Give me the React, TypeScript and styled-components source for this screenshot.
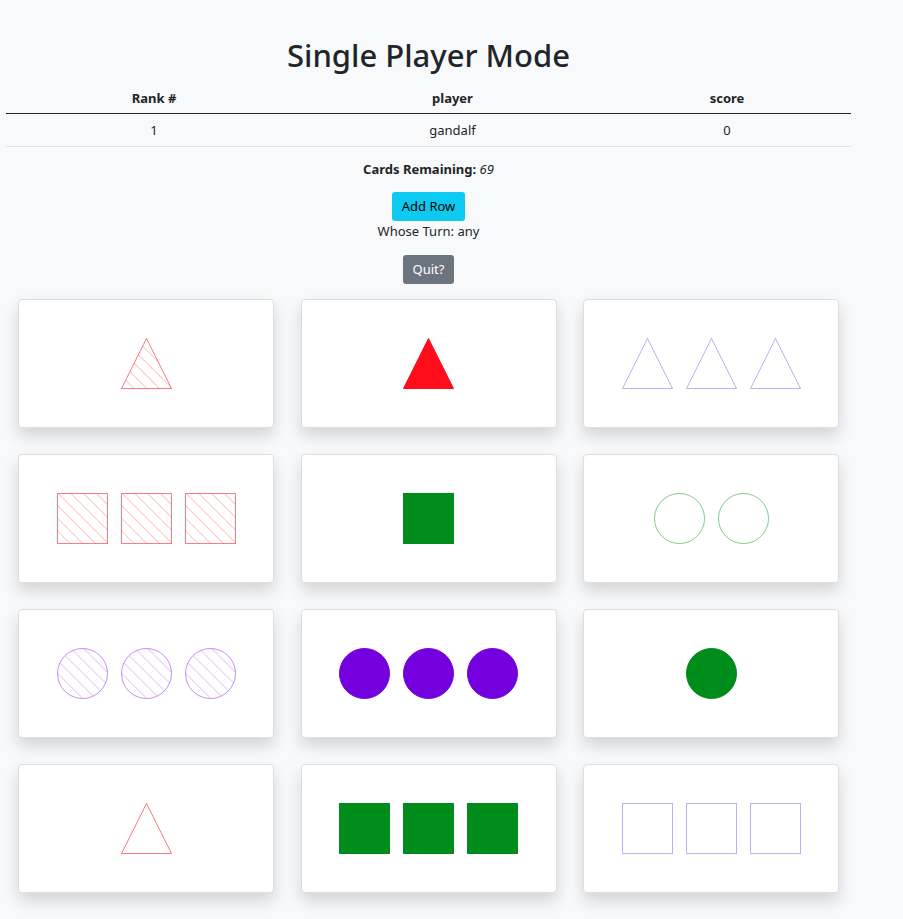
import React from 'react'
import styled, { createGlobalStyle } from 'styled-components'

type Shape = 'triangle' | 'square' | 'circle'
type Fill = 'solid' | 'striped' | 'outline'

interface CardData {
  shape: Shape
  fill: Fill
  color: string
  count: number
}

const RED = '#ff0d1a'
const GREEN = '#008c1a'
const PURPLE = '#7300dd'
const LAVENDER = '#8c6cf0'

const CARDS: CardData[] = [
  { shape: 'triangle', fill: 'striped', color: RED, count: 1 },
  { shape: 'triangle', fill: 'solid', color: RED, count: 1 },
  { shape: 'triangle', fill: 'outline', color: LAVENDER, count: 3 },
  { shape: 'square', fill: 'striped', color: RED, count: 3 },
  { shape: 'square', fill: 'solid', color: GREEN, count: 1 },
  { shape: 'circle', fill: 'outline', color: '#1aa032', count: 2 },
  { shape: 'circle', fill: 'striped', color: '#9b30f0', count: 3 },
  { shape: 'circle', fill: 'solid', color: PURPLE, count: 3 },
  { shape: 'circle', fill: 'solid', color: GREEN, count: 1 },
  { shape: 'triangle', fill: 'outline', color: RED, count: 1 },
  { shape: 'square', fill: 'solid', color: GREEN, count: 3 },
  { shape: 'square', fill: 'outline', color: LAVENDER, count: 3 },
]

const GlobalStyle = createGlobalStyle`
  body {
    margin: 0;
    background: #f8f9fa;
    color: #212529;
    font-family: "Noto Sans", "Open Sans", sans-serif;
    font-size: 13px;
  }
`

const Page = styled.div`
  box-sizing: border-box;
  width: 857px;
  padding: 36px 6px 30px;
  display: flex;
  flex-direction: column;
  align-items: center;
`

const Title = styled.h1`
  margin: 0 0 8px;
  font-size: 31px;
  font-weight: 500;
  line-height: 38px;
`

const Table = styled.div`
  width: 100%;
  display: grid;
  grid-template-columns: 296px 301px 1fr;
`

const HeadCell = styled.div`
  text-align: center;
  font-weight: 700;
  padding: 7px 0 6px;
  line-height: 18px;
  border-bottom: 1.5px solid #212529;
`

const Cell = styled.div`
  text-align: center;
  padding: 7px 0 7px;
  line-height: 18px;
  border-bottom: 1px solid #dee2e6;
`

const Remaining = styled.p`
  margin: 13px 0 13px;
  line-height: 19px;
  font-weight: 700;

  em {
    font-weight: 400;
  }
`

const Button = styled.button<{ $variant: 'info' | 'secondary' }>`
  box-sizing: border-box;
  height: 29px;
  font-family: inherit;
  font-size: 13px;
  line-height: 19px;
  padding: 0 10px;
  border: none;
  border-radius: 3px;
  background: ${p => (p.$variant === 'info' ? '#0dcaf0' : '#6c757d')};
  color: ${p => (p.$variant === 'info' ? '#000' : '#fff')};
`

const Turn = styled.div`
  line-height: 20px;
  margin-bottom: 14px;
`

const Board = styled.div`
  margin-top: 15px;
  display: grid;
  grid-template-columns: repeat(3, 256px);
  column-gap: 26.5px;
  row-gap: 26px;
`

const Card = styled.div`
  box-sizing: border-box;
  height: 129px;
  background: #fff;
  border: 1px solid #dcdfe2;
  border-radius: 4px;
  box-shadow: 0 8px 16px rgba(0, 0, 0, 0.15);
  display: flex;
  align-items: center;
  justify-content: center;
  gap: 13px;
`

const ShapeIcon: React.FC<{ card: CardData; id: string }> = ({ card, id }) => {
  const { shape, fill, color } = card
  const patId = `stripe-${id}`
  const fillValue = fill === 'solid' ? color : fill === 'striped' ? `url(#${patId})` : 'none'
  const strokeOpacity = fill === 'solid' ? 1 : 0.55
  const common = {
    fill: fillValue,
    stroke: color,
    strokeWidth: 1,
    strokeOpacity,
  }
  return (
    <svg width="51" height="51" viewBox="-0.5 -0.5 51 51">
      {fill === 'striped' && (
        <defs>
          <pattern id={patId} width="9" height="9" patternUnits="userSpaceOnUse" patternTransform="rotate(-45)">
            <line x1="0" y1="0" x2="0" y2="9" stroke={color} strokeWidth="1.6" strokeOpacity="0.3" />
          </pattern>
        </defs>
      )}
      {shape === 'triangle' && <polygon points="25,0 0,50 50,50" {...common} />}
      {shape === 'square' && <rect x="0" y="0" width="50" height="50" {...common} />}
      {shape === 'circle' && <circle cx="25" cy="25" r="25" {...common} />}
    </svg>
  )
}

const App: React.FC = () => {
  return (
    <>
      <GlobalStyle />
      <Page>
        <Title>Single Player Mode</Title>
        <Table>
          <HeadCell>Rank #</HeadCell>
          <HeadCell>player</HeadCell>
          <HeadCell>score</HeadCell>
          <Cell>1</Cell>
          <Cell>gandalf</Cell>
          <Cell>0</Cell>
        </Table>
        <Remaining>
          Cards Remaining: <em>69</em>
        </Remaining>
        <Button $variant="info">Add Row</Button>
        <Turn>Whose Turn: any</Turn>
        <Button $variant="secondary">Quit?</Button>
        <Board>
          {CARDS.map((card, i) => (
            <Card key={i}>
              {Array.from({ length: card.count }).map((_, j) => (
                <ShapeIcon key={j} card={card} id={`${i}-${j}`} />
              ))}
            </Card>
          ))}
        </Board>
      </Page>
    </>
  )
}

export default App
